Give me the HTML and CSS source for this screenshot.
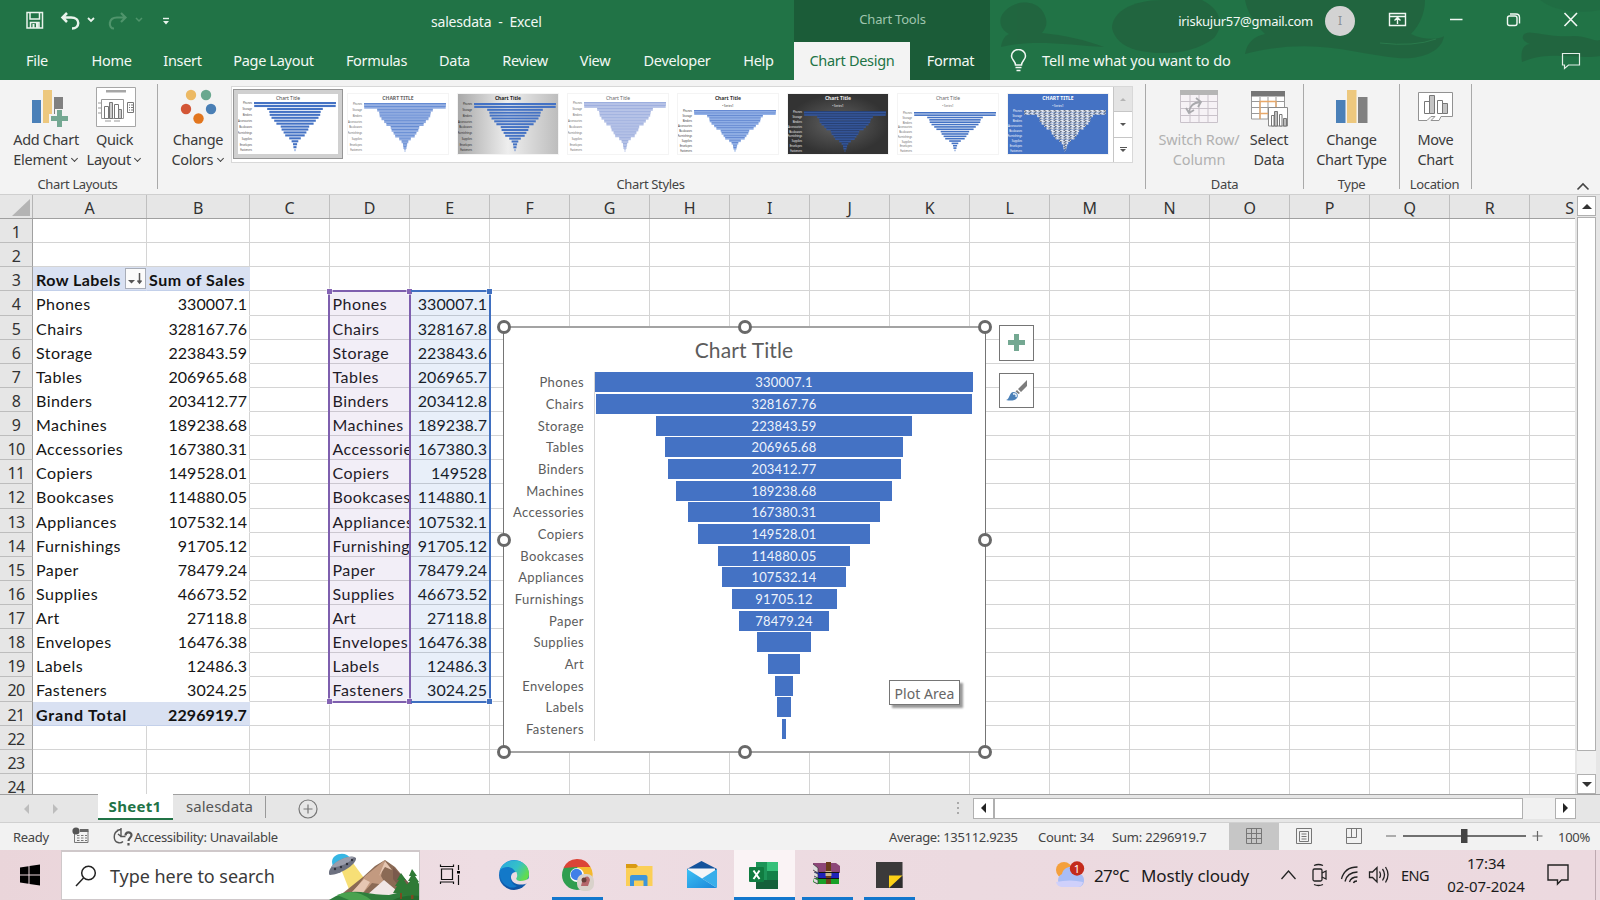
FILE: index.html
```html
<!DOCTYPE html>
<html lang="en">
<head>
<meta charset="utf-8">
<title>salesdata - Excel</title>
<link rel="stylesheet" href="styles.css">
</head>
<body>
<div class="app">
  <header class="top">
    <svg class="art" width="620" height="80" viewBox="980 0 620 80">
      <g fill="#215f3c" opacity=".65">
        <path d="M1001 17c6-14 28-20 40-8 6 8 8 16 1 24 22 2 44 7 62 14-34-2-72-8-103 0 1-6 3-11 8-13-7-4-10-10-8-17z"/>
        <path d="M1112 28c0-16 20-28 50-28h40c20 10 22 26 12 38-20 16-52 18-78 12-14-4-22-12-24-22z"/>
        <path d="M1245 0h180c0 14-6 26-14 34 12 6 28 6 33 2-2 16-24 24-46 22-44-4-84-22-153-4 2-12 10-18 20-20-10-10-18-22-20-34z"/>
        <path d="M1522 62c-2-12 2-18 8-18-12-4-8-14 4-11 16 2 22 4 40 3 14 0 20 6 26 4v16c-22 4-50-6-78 6z"/>
        <path d="M1540 0h60v10c-20 4-44 2-60-10z" opacity=".4"/>
      </g>
      <path d="M1380 43q34 4 56-4" fill="none" stroke="#2a7a4c"/>
    </svg>
    <div class="titlebar">
      <div class="qat">
        <svg width="150" height="24" viewBox="0 0 150 24" fill="none">
          <path d="M2 3.500h15.500v15.500H2z M5 3.500v6.500h9.500v-6.500 M5.500 19v-5.500h8.500v5.500" stroke="#e9f3ec" stroke-width="1.500"/><path d="M7.500 15h2v4h-2z M11 13.500h2.500v5.500H11z" fill="#e9f3ec"/>
          <path d="M42 4l-4.500 4.500L42 13M38 8.500h8c10 0 9 11 1 11" stroke="#e9f3ec" stroke-width="2.500"/>
          <path d="M63 9l3 3 3-3" stroke="#e9f3ec" stroke-width="1.800"/>
          <path d="M96 4l4.500 4.500L96 13M100 8.500h-8c-9 0-9 11-3 11" stroke="#4f946b" stroke-width="2.200"/>
          <path d="M111 9l3 3 3-3" stroke="#4f946b" stroke-width="1.500"/>
          <path d="M138 9.500h6" stroke="#e9f3ec" stroke-width="1.400"/><path d="M138 12h6l-3 3.500z" fill="#e9f3ec"/>
        </svg>
      </div>
      <div class="doc-name">salesdata&nbsp; -&nbsp; Excel</div>
      <div class="tools-title">Chart Tools</div>
      <div class="account">iriskujur57@gmail.com<span class="avatar">I</span></div>
      <svg class="winbtns" width="200" height="24" viewBox="1380 8 200 24" fill="none" stroke="#f2f8f4" stroke-width="1.400">
        <path d="M1389.500 13.500h16v12h-16zM1389.500 16.500h16M1397.500 24v-6M1394.500 20.500l3-3 3 3"/>
        <path d="M1450 19.500h12.500" stroke-width="1.500"/>
        <rect x="1507.500" y="16" width="9.500" height="9.500" rx="2"/><path d="M1510 14h6q3.500 0 3.500 3.500v6"/>
        <path d="M1564.500 13l12.500 13M1577 13l-12.500 13" stroke-width="1.600"/>
      </svg>
    </div>
    <nav class="tabs">
      <span class="t-file">File</span><span class="t-home">Home</span><span class="t-insert">Insert</span><span class="t-page">Page Layout</span><span class="t-form">Formulas</span><span class="t-data">Data</span><span class="t-review">Review</span><span class="t-view">View</span><span class="t-dev">Developer</span><span class="t-help">Help</span><span class="t-design">Chart Design</span><span class="t-format">Format</span>
      <svg class="bulb" width="17" height="24" viewBox="0 0 17 24" fill="none" stroke="#f2f8f4" stroke-width="1.500"><path d="M5.500 16c0-4-4-5-4-9a7 6.500 0 0 1 14 0c0 4-4 5-4 9zM5.500 18.500h6M6.500 21.500h4"/></svg>
      <span class="tell">Tell me what you want to do</span>
      <svg class="comment" width="20" height="18" viewBox="0 0 20 18" fill="none" stroke="#e4efe8" stroke-width="1.200"><path d="M1.500 1.500h17v11.500H7.500l-4 3.500V13h-2z"/></svg>
    </nav>
  </header>

  <section class="ribbon">
    <div class="group g-layouts">
      <div class="btns">
        <div class="btn b-add">
          <svg width="38" height="40" viewBox="0 0 38 40"><path fill="#4a80b8" d="M1 11h9v23H1z"/><path fill="#edc87e" d="M12 1h9v33h-9z"/><path fill="#808080" d="M23 8h9v20h-9z"/><path fill="#f3f3f3" d="M24 20h9v5h5v10h-5v4h-9v-5h-6v-9h6z"/><path fill="#74a892" d="M26 21h5v6h6v5h-6v6h-5v-6h-6v-5h6z"/></svg>
          <span>Add Chart</span><span>Element <i class="dd"></i></span>
        </div>
        <div class="btn b-quick">
          <svg width="40" height="40" viewBox="0 0 40 40"><path fill="#fff" stroke="#a6a6a6" d="M.500.500h39v39H.500z"/><path fill="#a6a6a6" d="M10 3h20v2.500H10z"/><g fill="none" stroke="#777"><path d="M5.500 12.500h22v19h-22zM2 16h3M2 21h3M2 26h3M9 34h6M18 34h6" stroke="#999"/><path fill="#fff" d="M8.500 19.500h4v12h-4zM18.500 17.500h4v14h-4z"/><path fill="#ccc" d="M13.500 15.500h3v16h-3zM22.500 22.500h3v9h-3z"/><path d="M31.500 15.500h6v10h-6zM33 18h1M35 18h2M33 20.500h1M35 20.500h2M33 23h1M35 23h2"/></g></svg>
          <span>Quick</span><span>Layout <i class="dd"></i></span>
        </div>
      </div>
      <div class="glabel">Chart Layouts</div>
    </div>
    <div class="group g-styles">
      <div class="btns">
        <div class="btn b-colors">
          <svg width="38" height="40" viewBox="0 0 38 40"><circle cx="12" cy="6" r="5.200" fill="#ecb964"/><circle cx="27" cy="6" r="5.200" fill="#6aa88f"/><circle cx="7" cy="20" r="5.200" fill="#d35636"/><circle cx="32" cy="20" r="5.200" fill="#4a7fb5"/><circle cx="19.500" cy="29.500" r="5.200" fill="#e2761e"/></svg>
          <span>Change</span><span>Colors <i class="dd"></i></span>
        </div>
        <div class="gallery"><div class="thumbs" id="thumbs"></div>
          <div class="gscroll"><b class="up off"></b><b class="down"></b><b class="more"></b></div>
        </div>
      </div>
      <div class="glabel">Chart Styles</div>
    </div>
    <div class="group g-data">
      <div class="btns">
        <div class="btn b-switch">
          <svg width="38" height="40" viewBox="0 0 38 40" fill="none"><path fill="#f6f2f6" stroke="#c9c2ca" d="M.500 4h37v29.500H.500zM.500 12.500h37M.500 19.500h37M.500 26.500h37M10 6v27M19 6v27M28 6v27"/><path fill="#b5b5b5" d="M0 1h38v5H0z"/><path d="M9 23q1-9 11-10M16 9l5 4-3 5M6 19l3 5 5-3" stroke="#a9a9ad" stroke-width="1.800"/></svg>
          <span>Switch Row/</span><span>Column</span>
        </div>
        <div class="btn b-select">
          <svg width="38" height="40" viewBox="0 0 38 40" fill="none"><path fill="#fff" stroke="#999" d="M.500 3h33v27H.500zM.500 12.500h33M.500 18.500h33M.500 24.500h33M9 8v22M17 8v22M25 8v22"/><path fill="#767676" d="M0 2h34v5.500H0z"/><path stroke="#e8a869" stroke-width="1.300" d="M9 30V12.500h16v6M9 24.500h9"/><path fill="#fff" stroke="#8a8a8a" d="M17.500 18.500h19v18.500h-19z"/><path fill="#fff" stroke="#777" d="M20.500 26.500h2.500v10.500h-2.500zM28.500 25.500h2.500v11.500h-2.500z"/><path fill="#bbb" stroke="#777" d="M23.500 22.500h3v14.500h-3zM32.500 29.500h3v7.500h-3z"/></svg>
          <span>Select</span><span>Data</span>
        </div>
      </div>
      <div class="glabel">Data</div>
    </div>
    <div class="group g-type">
      <div class="btns"><div class="btn">
        <svg width="32" height="40" viewBox="0 0 32 40"><path fill="#4a80b8" d="M0 11h9.500v23H0z"/><path fill="#edc87e" d="M11 1h9.500v33H11z"/><path fill="#808080" d="M22 8h9.500v26H22z"/></svg>
        <span>Change</span><span>Chart Type</span></div></div>
      <div class="glabel">Type</div>
    </div>
    <div class="group g-loc">
      <div class="btns"><div class="btn">
        <svg width="36" height="40" viewBox="0 0 36 40" fill="none"><path fill="#fff" stroke="#929292" d="M.500 3.500h34v24H23l-2 4h-8l4-4h-4l-4 4H.500z"/><path fill="#fff" stroke="#777" d="M6.500 12.500h5v12h-5zM19.500 11.500h5v13h-5z"/><path fill="#c4c4c4" stroke="#777" d="M11.500 6.500h5v18h-5zM24.500 14.500h5v10h-5z"/></svg>
        <span>Move</span><span>Chart</span></div></div>
      <div class="glabel">Location</div>
    </div>
    <svg class="collapse" width="14" height="10" viewBox="0 0 14 10" fill="none" stroke="#444" stroke-width="1.600"><path d="M1.500 8.500L7 3l5.500 5.500"/></svg>
  </section>

  <main class="sheet">
    <div class="grid">
      <div class="cols" id="cols"></div>
      <div class="rows" id="rows"></div>
      <div class="range range-d"><i class="tl"></i><i class="tr"></i><i class="bl"></i><i class="br"></i></div>
      <div class="range range-e"><i class="tr"></i><i class="br"></i></div>
      <div class="chart">
        <div class="chart-title">Chart Title</div>
        <div class="plot" id="plot"></div>
        <i class="h h-nw"></i><i class="h h-n"></i><i class="h h-ne"></i><i class="h h-w"></i><i class="h h-e"></i><i class="h h-sw"></i><i class="h h-s"></i><i class="h h-se"></i>
        <div class="tooltip">Plot Area</div>
        <div class="side">
          <div><svg width="17" height="17" viewBox="0 0 17 17"><path fill="#74a892" d="M6 0h5v6h6v5h-6v6H6v-6H0V6h6z"/></svg></div>
          <div><svg width="22" height="22" viewBox="0 0 22 22"><path fill="#7c7c7c" d="M21 1v6l-6 6-3-3zM11 11l3 3-1.500 1-3-2.500z"/><path fill="#4a80b8" d="M0 21c4-1 3-7 7-8 4 0 6 3 4 6-2 3-7 3-11 2z"/><path d="M7 15q4-1 3 3" stroke="#fff" stroke-width="1.300" fill="none"/></svg></div>
        </div>
      </div>
    </div>
    <div class="vscroll"><b class="vb"><i class="a-up"></i></b><b class="vthumb"></b><b class="vtrack"></b><b class="vb"><i class="a-dn"></i></b></div>
  </main>

  <div class="sheettabs">
    <i class="nav-l"></i><i class="nav-r"></i>
    <span class="tab-on">Sheet1</span><span class="tab-off">salesdata</span>
    <svg class="add" width="20" height="20" viewBox="0 0 20 20" fill="none" stroke="#777" stroke-width="1.200"><circle cx="10" cy="10" r="9"/><path d="M10 5.500v9M5.500 10h9"/></svg>
    <svg class="dots" width="3" height="14" viewBox="0 0 3 14" fill="#aaa"><path d="M0 0h2v2H0zM0 5h2v2H0zM0 10h2v2H0z"/></svg>
    <div class="hscroll"><b class="hb"><i class="a-l"></i></b><b class="hthumb"></b><b class="htrack"></b><b class="hb"><i class="a-r"></i></b></div>
  </div>

  <div class="status">
    <span class="s-ready">Ready</span>
    <svg class="s-rec" width="18" height="17" viewBox="0 0 18 17" fill="none"><path stroke="#777" d="M2.500 6.500v9h13.500V3.500H8"/><path stroke="#777" stroke-dasharray="2.500 1.500" d="M5 8.500h10M5 11h10M5 13.500h10"/><path fill="#666" d="M8 2h8.500v3H8z"/><circle cx="4" cy="4" r="3.600" fill="#555"/></svg>
    <svg class="s-acc" width="20" height="19" viewBox="0 0 20 19" fill="none" stroke="#555" stroke-width="1.400"><path d="M5 3.500C0 6 0 14 5 15.500q3 1 5-1M4 3.500l3.500-1M8 1v8.500h4.500M8 9.500l-3-2.500"/><path d="M12.500 8.500c0-4 6-4 6-.500 0 3-3 2.500-3 6M15.500 16v2.500" stroke-width="2.200"/></svg>
    <span class="s-text">Accessibility: Unavailable</span>
    <span class="s-avg">Average: 135112.9235</span><span class="s-cnt">Count: 34</span><span class="s-sum">Sum: 2296919.7</span>
    <span class="view on"><svg width="17" height="17" viewBox="0 0 17 17" fill="none" stroke="#777"><path d="M.500.500h15v15h-15zM5.500.500v15M10.500.500v15M.500 5.500h15M.500 10.500h15"/></svg></span>
    <span class="view"><svg width="17" height="17" viewBox="0 0 17 17" fill="none" stroke="#777"><path d="M.500.500h15v15h-15zM3.500 3.500h9v10h-9zM5.500 6h5M5.500 8.500h5M5.500 11h5"/></svg></span>
    <span class="view"><svg width="17" height="17" viewBox="0 0 17 17" fill="none" stroke="#777"><path d="M.500.500h15v15h-15zM5.500.500v9M10.500.500v9M.500 9.500h10"/></svg></span>
    <svg class="zoombar" width="160" height="18" viewBox="1384 0 160 18"><path d="M1386 9h10M1532.500 9h10M1537.500 4v10" stroke="#666" stroke-width="1.200"/><path d="M1403 9h123" stroke="#444" stroke-width="1.500"/><path d="M1461 2h6.500v14h-6.500z" fill="#444"/></svg>
    <span class="s-zoom">100%</span>
  </div>

  <footer class="taskbar">
    <svg class="start" width="22" height="22" viewBox="0 0 22 22"><path d="M1 3.500l8.500-1.300v8.300H1zM10.500 2L21 .500v10H10.500zM1 11.500h8.500v8.300L1 18.500zM10.500 11.500H21v10L10.500 20z"/></svg>
    <div class="search">
      <svg class="mag" width="22" height="22" viewBox="0 0 22 22" fill="none" stroke="#222" stroke-width="1.500"><circle cx="13.500" cy="8" r="6.800"/><path d="M8.500 13L1 21"/></svg>
      <span>Type here to search</span>
      <svg class="scene" width="90" height="47" viewBox="0 0 90 47">
        <path fill="#f7df76" d="M12 16l12-6 11 15-12 19z"/><path fill="#8b6a55" d="M14 40l20-16 12-11 10-6 10 7 20 24-20 9H26z"/><path fill="#c39a80" d="M36 23l20-16-4 16 5 9-14-2-8 9-12 2z"/><path fill="#e6c6b2" d="M22 40l13-14 6 3-9 14zM56 8l7 9-7-3-6 9z"/><path fill="#f1e7e6" d="M38 42l17-15 12 10 10 5-12 3z"/><path fill="#7a5a4c" d="M64 14l22 22-12 2-10-12z"/>
        <path fill="#2e7d3c" d="M0 47q14-10 32-8 16 3 28 3l32-8v13z"/><path fill="#49a24f" d="M8 42q18-8 34 5H20z"/><path fill="#246b2e" d="M64 47q12-6 28-4v4z"/>
        <path fill="#7b4b22" d="M71 36h2v10h-2zM82 34h2.500v12H82z"/><path fill="#2f7a36" d="M72 20l5 7h-2l4 6h-2l4 7H64l4-7h-2l4-6h-2zM83 16l5 7h-2l4 6h-1l3 6v7H74l4-8h-2l5-6h-2l3-5h-2z"/>
        <path fill="#36b6e3" d="M3 9C3 2 12-1 18 2l5 4-10 8-9 1z"/><path fill="#6d7180" d="M1 16C6 7 22 1 27 5c1 6-16 17-26 17-2-1-1-4 0-6z"/><path fill="#9a9dab" d="M2 14C8 6 22 2 25 4 20 11 8 15 2 14z"/><g fill="#30323b"><circle cx="6" cy="16" r="1.200"/><circle cx="12" cy="14" r="1.200"/><circle cx="18" cy="11" r="1.200"/><circle cx="23" cy="7" r="1.200"/></g>
      </svg>
    </div>
    <svg class="apps" width="500" height="50" viewBox="420 850 500 50">
      <defs>
        <linearGradient id="e1" x1="0" y1="0" x2="1" y2=".5"><stop offset="0" stop-color="#2aa6e0"/><stop offset=".6" stop-color="#35c1c8"/><stop offset="1" stop-color="#62dc4e"/></linearGradient>
        <linearGradient id="e2" x1="0" y1="0" x2="0" y2="1"><stop offset="0" stop-color="#1f8fdd"/><stop offset="1" stop-color="#0d4fa0"/></linearGradient>
        <linearGradient id="m1" x1="0" y1="0" x2="1" y2="1"><stop offset="0" stop-color="#3cc0f5"/><stop offset="1" stop-color="#1a86d8"/></linearGradient>
      </defs>
      <g fill="none" stroke="#111" stroke-width="1.200"><path d="M441.500 869h11v10.500h-11zM440.500 864.500v2h13v-2M440.500 884v-2h13v2M458.500 865v5M458.500 875v10"/></g><path d="M457 871h3v2.500h-3z"/>
      <circle cx="514" cy="875" r="15" fill="url(#e2)"/><path fill="url(#e1)" d="M499.500 871c4-15 29.500-14 29.500 3 0 8-9 10-13 7-2-2 1-2 0-6-2-7-12-8-16.500-4z"/><path fill="#1379c9" d="M500 870c7-6 15-2 16 4-7-2-8 9 1 12-6 5-19-2-17-16z"/><path fill="#ecdce2" d="M516.500 872c-7 0-7 8-2 11 4 2 9 2 13 0l2-1v-4c-4 3-10 4-12.500 2-2-2 1-2 0-6z"/>
      <circle cx="577" cy="875" r="15" fill="#2f9e4f"/><path fill="#dc4437" d="M563.500 868a15 15 0 0 1 27-1H577z"/><path fill="#f4b92f" d="M577 867h13.500a15 15 0 0 1-10 22.500l3-12z"/><circle cx="577" cy="875" r="7" fill="#fff"/><circle cx="576.500" cy="874.500" r="5.700" fill="#3f7fe8"/><rect x="577" y="874" width="17" height="17" rx="7" fill="#d9d2cb"/><path fill="#b5676a" d="M585 877q4-2 5 3l-2 6h-7l1-4q3 0 3-5z"/><circle cx="584" cy="880" r="2.500" fill="#674039"/>
      <path fill="#d99a13" d="M626 864h10l2 2v3h-12z"/><path fill="#fbcf57" d="M626 868h10l2-2h14.500v20H626z"/><path fill="#3d95da" d="M630 877q0-2 2-2h13.500q2 0 2 2v9h-4v-5.500H634v5.500h-4z"/>
      <path fill="#14539c" d="M687 869l14.500-8 15.500 8v4h-30z"/><path fill="#f4f6f8" d="M688 868.500h27v6l-13.500 6-13.500-6z"/><path fill="url(#m1)" d="M687 869l30 19h-30z"/><path fill="#38aeea" d="M717 869v19l-15-9.500z"/>
      <path fill="#faf3f5" d="M734 850h61v50h-61z"/><path fill="#1d9458" d="M756 862h22v27h-22z"/><path fill="#36c07a" d="M767 862h11v9h-11z"/><path fill="#15603a" d="M756 880h22v9h-22z"/><path fill="#148049" d="M767 871h11v9h-11z"/><rect x="749" y="867" width="15" height="15" rx="1" fill="#107c41"/><path d="M753.500 870.500l6 8.500M759.500 870.500l-6 8.500" stroke="#fff" stroke-width="2"/>
      <path fill="#8d4778" d="M813 863h23l4 3v7h-23l-4-3z"/><path fill="#1e23b8" d="M814 872h25v6h-22l-3-2z"/><path fill="#17a027" d="M814 878h25v6h-22l-4-2z"/><path d="M813 864l5 4v5l-5-3M814 872l4 2v4l-4-2M814 878l4 2v4l-4-2" fill="#ddd" stroke="#333" stroke-width=".7"/><path fill="#6b3d1c" d="M826 862h5v22h-5z"/><path fill="#c9b489" d="M825.500 871h6v5h-6z"/><path d="M819 872.500h20M818 878.500h21" stroke="#141414"/>
      <path fill="#3b3a3a" d="M876 862h26.500v26H876z"/><path fill="#fcd116" d="M889 875.500h13.500L889 888z"/><path fill="#2a2a2a" d="M902.500 876v12h-13z" opacity=".8"/>
      <path fill="#1277cd" d="M552 897h51v3h-51zM734 897h61v3h-61zM802 897h51v3h-51zM864 897h51v3h-51z"/>
    </svg>
    <svg class="weather" width="32" height="30" viewBox="0 0 32 30"><circle cx="9" cy="10" r="8" fill="#f4a03c"/><path fill="#a9bdf5" d="M8 27a7 7 0 0 1-1-13c2-9 14-9 16-1 8 1 8 14 0 14z"/><path fill="#cfd0fb" d="M1 22q14-3 27 0-1 5-5 5H8q-6 0-7-5z"/><circle cx="22" cy="8.500" r="7.200" fill="#c42b1c"/><text x="22" y="12.800" text-anchor="middle" class="badge">1</text></svg>
    <span class="w-temp">27°C</span><span class="w-text">Mostly cloudy</span>
    <svg class="tray" width="110" height="26" viewBox="1280 862 110 26" fill="none" stroke="#222" stroke-width="1.300"><path d="M1281.500 879l7-8 7 8"/><rect x="1313" y="869" width="9" height="12" rx="1.500"/><path d="M1322 873l4-2v8l-4-2M1314 865.500q4.500-2 9 0M1314 884.500q4.500 2 9 0"/><path d="M1341.500 879q3-12 16-12M1345 881.500q2-9 12.500-9.500M1349.500 882q1.500-5 8-5M1353.500 883q.500-2 3.500-2"/><path d="M1369.500 872h3l4.500-4.500v14.500l-4.500-4.500h-3zM1379.500 871.500q2 3.500 0 6.500M1382.500 869q4 5.500 0 11.500M1385.500 867q5 7.500 0 15.500"/></svg>
    <span class="lang">ENG</span>
    <span class="clock"><span>17:34</span><span>02-07-2024</span></span>
    <svg class="notif" width="22" height="24" viewBox="0 0 22 24" fill="none" stroke="#222" stroke-width="1.400"><path d="M1 2h20v15h-6.500v0l-4 4v-4H1z"/></svg>
    <i class="peek"></i>
  </footer>
</div>
<script src="script.js"></script>
</body>
</html>
```
FILE: styles.css
```css
* { box-sizing: border-box; }
body { margin: 0; width: 1600px; height: 900px; overflow: hidden; font-family: "Noto Sans", "Open Sans", sans-serif; color: #333; }
i, b { font-style: normal; display: block; }
svg { display: block; flex: none; }
.app { display: flex; flex-direction: column; width: 1600px; height: 900px; white-space: nowrap; }

/* Title bar and ribbon tabs */
.top { position: relative; height: 80px; background: linear-gradient(90deg, transparent 794px, #1b5c38 794px, #1b5c38 990px, transparent 990px), #217346; color: #f2f8f4; }
.art { position: absolute; right: 0; top: 0; clip-path: inset(0 0 0 10px); }
.titlebar { position: relative; display: flex; align-items: center; height: 42px; }
.qat { width: 431px; padding-left: 25px; }
.doc-name { width: 363px; font-size: 14px; letter-spacing: -.2px; }
.tools-title { width: 197px; text-align: center; font-size: 13px; letter-spacing: -.2px; color: #9fc5ae; padding-bottom: 4px; }
.account { display: flex; align-items: center; justify-content: flex-end; width: 364px; font-size: 13px; letter-spacing: -.27px; gap: 12px; }
.avatar { width: 30px; height: 30px; border-radius: 50%; background: #d3d3d3; color: #8a8f96; text-align: center; line-height: 30px; font-size: 12px; }
.winbtns { margin-left: 25px; margin-top: -2px; }
.tabs { position: relative; display: flex; align-items: center; height: 38px; padding-bottom: 2px; font-size: 14.5px; letter-spacing: -.3px; text-align: center; }
.t-file { width: 74px; } .t-home { width: 75px; } .t-insert { width: 67px; } .t-page { width: 115px; } .t-form { width: 91px; } .t-data { width: 65px; }
.t-review { width: 76px; } .t-view { width: 64px; } .t-dev { width: 100px; } .t-help { width: 63px; margin-right: 4px; }
.t-design { width: 116px; height: 38px; line-height: 37px; background: #f3f3f3; color: #217346; margin-bottom: -2px; }
.t-format { width: 81px; }
.bulb { margin-left: 19px; margin-top: 2px; }
.tell { margin-left: 15px; width: 519px; text-align: left; letter-spacing: -.1px; }
.comment { margin-top: 2px; }

/* Ribbon */
.ribbon { position: relative; display: flex; height: 115px; background: #f3f3f3; border-bottom: 1px solid #cfcfcf; padding-top: 4px; }
.group { height: 105px; border-right: 1px solid #a9a9a9; display: flex; flex-direction: column; }
.btns { display: flex; height: 88px; }
.btn { display: flex; flex-direction: column; align-items: center; font-size: 14.5px; letter-spacing: -.3px; line-height: 20px; color: #3b3b3b; }
.btn svg { margin: 5px 0 0; height: 40px; }
.btn .dd { display: inline-block; width: 5px; height: 5px; border: solid #444; border-width: 0 1.5px 1.5px 0; transform: rotate(45deg); margin: 0 2px 4px 1px; }
.glabel { text-align: center; font-size: 13px; letter-spacing: -.35px; line-height: 18px; margin-top: 3px; margin-bottom: -8px; color: #444; }
.g-layouts { width: 158px; }
.g-layouts .glabel { padding-right: 2px; }
.b-add { width: 80px; margin-left: 6px; } .b-add svg { margin-left: 8px; }
.b-quick { width: 57px; } .b-quick svg { margin: 3px 0 2px 2px; }
.g-styles { width: 988px; }
.g-styles .glabel { padding-right: 2px; }
.b-colors { width: 73px; padding-left: 7px; }
.gallery { display: flex; width: 902px; height: 77px; margin-top: 2px; border: 1px solid #d8d8d8; background: #fff; }
.thumbs { display: flex; width: 881px; padding: 7px 0 0 6px; gap: 10px; }
.thumb { width: 100px; height: 60px; flex: none; box-shadow: 0 0 0 1px #f4f4f4; }
.thumb.sel { box-shadow: 0 0 0 4px #d0d0d0, 0 0 0 5px #969696; }
.gscroll { flex: 1; display: flex; flex-direction: column; border-left: 1px solid #c6c6c6; }
.gscroll b { flex: 1; display: flex; align-items: center; justify-content: center; border-bottom: 1px solid #c6c6c6; }
.gscroll b:last-child { border: 0; flex-direction: column; gap: 1px; }
.gscroll b::after { content: ""; border: 3.5px solid transparent; border-top-color: #555; border-bottom: 0; }
.gscroll .off { background: #e4e4e4; }
.gscroll .off::after { border-bottom: 3.5px solid #b5b5b5; border-top: 0; }
.gscroll .more::before { content: ""; width: 7px; height: 1px; background: #555; }
.g-data { width: 158px; }
.b-switch { width: 100px; color: #b1b1b1; margin-left: 3px; } .b-select { width: 40px; } .b-select svg { margin-left: 1px; }
.b-switch span { letter-spacing: -.1px; }
.g-type { width: 96px; } .g-loc { width: 72px; }
.g-type .btn, .g-loc .btn { width: 100%; }
.g-loc .glabel { padding-right: 2px; }
.collapse { position: absolute; right: 10px; bottom: 3px; }

/* Worksheet */
.sheet { display: flex; height: 599px; background: #e6e6e6; overflow: hidden; }
.grid { position: relative; width: 1575px; height: 599px; overflow: hidden; background: #fff; }
.cols { display: flex; height: 24px; background: #e6e6e6; border-bottom: 1px solid #a0a0a0; }
.cols span { flex: none; border-right: 1px solid #bfbfbf; text-align: center; font-size: 16px; letter-spacing: -.3px; line-height: 26px; height: 23px; }
.cols .corner { border-color: #b5b5b5; }
.corner::after { content: ""; display: block; margin: 4px 0 0 12px; border: solid transparent; border-width: 0 0 17px 18px; border-bottom-color: #b4b4b4; width: 0; }
.row { display: flex; height: 24.14px; }
.row > * { flex: none; border-right: 1px solid #d4d4d4; border-bottom: 1px solid #d4d4d4; overflow: hidden; line-height: 25px; font-family: Lato, "Liberation Sans", sans-serif; font-size: 16px; letter-spacing: .47px; color: #151515; padding: 0 2px 0 3px; }
.row .num { background: #e6e6e6; border-color: #ababab #a0a0a0 #bdbdbd; text-align: center; font-family: "Noto Sans", sans-serif; letter-spacing: -.6px; color: #333; padding: 0; line-height: 26px; }
.w-num { width: 33px; } .w-a { width: 114px; } .w-b { width: 103px; } .w-c { width: 80px; }
.row .r { text-align: right; letter-spacing: .06px; }
.row .d { padding-left: 2.5px; }
.pivot .pa { border-color: transparent; }
.pivot .pb { border-bottom-color: transparent; }
.band .pa, .band .pb { background: #d9e1f2; font-weight: 700; border-color: #d9e1f2 #d9e1f2 #c3d0ea; letter-spacing: .45px; color: #111; }
.band .pa { display: flex; justify-content: space-between; padding-right: 0; }
.head .pb { text-align: left; padding-left: 2px; letter-spacing: .55px; }
.total .pa { letter-spacing: .85px; } .total .pb { letter-spacing: .1px; }
.filter { width: 21px; height: 21px; margin-top: 1px; background: #fbfbfb; border: 1px solid #a8adb8; flex: none; }

/* Ranges linked to the chart */
.range { position: absolute; top: 95px; height: 413px; }
.range-d { left: 328px; width: 83px; border: 2px solid #7e5fae; background: rgba(126, 84, 176, .1); }
.range-e { left: 411px; width: 80px; border: 2px solid #3f6fc0; border-left: 0; background: rgba(48, 112, 200, .11); }
.range i { position: absolute; width: 5px; height: 5px; background: #8463b4; box-shadow: 0 0 0 .5px #fff; }
.range-e i { background: #3f6fc0; }
.tl { top: -3px; left: -3px; } .tr { top: -3px; right: -3px; } .bl { bottom: -3px; left: -3px; } .br { bottom: -3px; right: -3px; }

/* Floating chart object */
.chart { position: absolute; left: 503px; top: 131px; width: 483px; height: 427px; background: #fff; border: 1px solid #757575; border-top: 2px solid #a3a3a3; border-bottom: 2px solid #a3a3a3; font-family: Lato, "Liberation Sans", sans-serif; }
.chart-title { height: 44.4px; line-height: 43px; text-align: center; font-size: 21px; color: #5c5c5c; letter-spacing: .15px; padding-right: 1px; }
.plot { display: flex; flex-direction: column; }
.prow { display: flex; height: 21.67px; }
.plab { width: 91px; padding-right: 10px; text-align: right; font-size: 13px; letter-spacing: .4px; line-height: 21px; color: #5c5c5c; border-right: 1px solid #d5d5d5; }
.ptrack { width: 378px; display: flex; justify-content: center; }
.bar { height: 20px; line-height: 21px; background: #4472c4; color: #eef3fb; text-align: center; font-size: 13px; letter-spacing: .2px; }
.h { position: absolute; width: 14px; height: 14px; border-radius: 50%; border: 3px solid #696969; background: #fff; }
.h-nw, .h-w, .h-sw { left: -7px; } .h-ne, .h-e, .h-se { right: -7px; } .h-n, .h-s { left: 234px; }
.h-nw, .h-n, .h-ne { top: -8px; } .h-w, .h-e { top: 205px; } .h-sw, .h-s, .h-se { bottom: -8px; }
.tooltip { position: absolute; left: 385px; top: 352px; width: 71px; height: 25px; line-height: 25px; text-align: center; background: #fff; border: 1px solid #767676; box-shadow: 3px 3px 2px rgba(0, 0, 0, .4); font-family: "Noto Sans", sans-serif; font-size: 14px; letter-spacing: .05px; color: #666; }
.side { position: absolute; left: 495px; top: -3px; display: flex; flex-direction: column; gap: 12px; }
.side div { width: 35px; height: 35.500px; background: #fff; border: 1px solid #757575; display: flex; align-items: center; justify-content: center; }

/* Scroll bars */
.vscroll { margin-left: 2px; width: 19px; display: flex; flex-direction: column; padding-top: 1px; }
.vb, .vthumb { background: #fff; border: 1px solid #b0b0b0; }
.vb { height: 20px; display: flex; align-items: center; justify-content: center; }
.vthumb { height: 534px; margin-top: 1px; }
.vtrack { flex: 1; background: #f1f1f1; }
.a-up { border: 5px solid transparent; border-bottom-color: #333; border-top: 0; }
.a-dn { border: 5px solid transparent; border-top-color: #333; border-bottom: 0; }
.a-l { border: 5px solid transparent; border-right-color: #222; border-left: 0; }
.a-r { border: 5px solid transparent; border-left-color: #222; border-right: 0; }

/* Sheet tabs */
.sheettabs { display: flex; align-items: center; height: 29px; background: #e6e6e6; border-top: 1px solid #a0a0a0; border-bottom: 1px solid #d0d0d0; }
.nav-l { margin-left: 24px; border: 5px solid transparent; border-right-color: #bdbdbd; border-left: 0; }
.nav-r { margin: 0 40px 0 24px; border: 5px solid transparent; border-left-color: #bdbdbd; border-right: 0; }
.tab-on { width: 75px; height: 26px; margin-top: -3px; line-height: 24px; background: #fff; border-bottom: 2px solid #217346; text-align: center; font-weight: 700; font-size: 15px; color: #217346; letter-spacing: .3px; padding-right: 1px; }
.tab-off { width: 93px; height: 22px; line-height: 20px; border-right: 1px solid #999; padding-left: 13px; font-size: 15px; letter-spacing: .05px; color: #555; margin-top: -3px; }
.add { margin-left: 32px; }
.dots { margin-left: 639px; }
.hscroll { display: flex; height: 21px; margin-left: 13px; margin-top: -1px; }
.hscroll b { border: 1px solid #b0b0b0; background: #fff; height: 21px; }
.hb { width: 21px; display: flex; align-items: center; justify-content: center; }
.hthumb { width: 529px; }
.hscroll .htrack { width: 32px; background: #f1f1f1; border: 0; }

/* Status bar */
.status { display: flex; align-items: center; height: 27px; background: #f2f2f2; font-size: 13px; letter-spacing: -.3px; color: #444; padding-left: 13px; }
.s-ready { width: 59px; } .s-rec { margin-right: 23px; margin-top: -3px; } .s-text { margin-left: 1px; width: 755px; }
.s-avg { width: 149px; } .s-cnt { width: 74px; } .s-sum { width: 117px; letter-spacing: -.2px; }
.view { width: 50px; height: 27px; display: flex; align-items: center; justify-content: center; }
.view.on { background: #c6c6c6; }
.zoombar { margin-left: 5px; margin-top: -1px; }
.s-zoom { margin-left: 14px; }

/* Windows taskbar */
.taskbar { display: flex; align-items: center; height: 50px; background: linear-gradient(90deg, #ead5da, #eedde3 30%, #ecdae0 60%, #ecd9df); color: #1b1b1b; }
.start { margin-left: 19px; }
.search { margin-left: 20px; width: 359px; height: 50px; background: #fff; border: 1px solid #cfc8ca; border-top-width: 2px; display: flex; align-items: center; font-size: 18px; letter-spacing: -.05px; color: #3a3a3a; }
.mag { margin-left: 13px; } .search span { margin-left: 13px; width: 220px; }
.scene { margin-top: 1px; }
.weather { margin-left: 135px; }
.badge { fill: #fff; font-size: 11px; }
.w-temp { margin-left: 7px; width: 47px; font-size: 17px; letter-spacing: -.6px; }
.w-text { width: 139px; font-size: 17px; letter-spacing: -.15px; }
.lang { margin-left: 11px; width: 45px; font-size: 14.5px; letter-spacing: -.5px; }
.clock { width: 80px; display: flex; flex-direction: column; align-items: center; font-size: 15px; line-height: 23px; letter-spacing: -.1px; }
.notif { margin-left: 21px; }
.peek { margin-left: auto; margin-right: 4px; width: 1px; height: 50px; background: #bda9b0; }
```
FILE: script.js
```js
const items = [
  ["Phones", "330007.1", "330007.1"], ["Chairs", "328167.76", "328167.8"], ["Storage", "223843.59", "223843.6"],
  ["Tables", "206965.68", "206965.7"], ["Binders", "203412.77", "203412.8"], ["Machines", "189238.68", "189238.7"],
  ["Accessories", "167380.31", "167380.3"], ["Copiers", "149528.01", "149528"], ["Bookcases", "114880.05", "114880.1"],
  ["Appliances", "107532.14", "107532.1"], ["Furnishings", "91705.12", "91705.12"], ["Paper", "78479.24", "78479.24"],
  ["Supplies", "46673.52", "46673.52"], ["Art", "27118.8", "27118.8"], ["Envelopes", "16476.38", "16476.38"],
  ["Labels", "12486.3", "12486.3"], ["Fasteners", "3024.25", "3024.25"]
];
const max = 330007.1;

document.getElementById("cols").innerHTML = '<span class="corner w-num"></span>' +
  [..."ABCDEFGHIJKLMNOPQRS"].map((c, i) => `<span class="${i === 0 ? "w-a" : i === 1 ? "w-b" : "w-c"}">${c}</span>`).join("");

const filter = '<span class="filter"><svg width="19" height="19" viewBox="0 0 19 19"><path d="M2 11h7l-3.500 3.500z" fill="#555"/><path d="M13.500 4v10M11.500 11.500l2 2.500 2-2.500" stroke="#555" stroke-width="1.500" fill="none"/></svg></span>';
let rows = "";
for (let r = 1; r <= 24; r++) {
  const it = items[r - 4];
  let a = "", b = "", d = "", e = "", cls = "row";
  if (r === 3) { a = "Row Labels" + filter; b = "Sum of Sales"; cls += " band head"; }
  if (r === 21) { a = "Grand Total"; b = "2296919.7"; cls += " band total"; }
  if (it) { a = it[0]; b = it[1]; d = it[0]; e = it[2]; cls += " pivot"; }
  rows += `<div class="${cls}"><span class="num w-num">${r}</span><span class="w-a pa">${a}</span><span class="w-b pb${r === 3 ? "" : " r"}">${b}</span><span class="w-c"></span><span class="w-c d">${d}</span><span class="w-c r">${e}</span>` +
    '<span class="w-c"></span>'.repeat(14) + "</div>";
}
document.getElementById("rows").innerHTML = rows;

document.getElementById("plot").innerHTML = items.map((it, i) =>
  `<div class="prow"><span class="plab">${it[0]}</span><span class="ptrack"><span class="bar" style="width:${(it[1] / max * 378).toFixed(1)}px">${i < 12 ? it[1] : ""}</span></span></div>`).join("");

// Chart style gallery previews
const styles = [
  { bg: "#fff", fg: "#444", title: "Chart Title", bar: "#4472c4", top: 8, h: .72 },
  { bg: "#fff", fg: "#666", title: "CHART TITLE", bar: "#8eaae0", edge: "#5b84d0", top: 9, h: .98, bold: true },
  { bg: "url(#silver)", fg: "#222", title: "Chart Title", bar: "#4472c4", top: 9, h: .72, bold: true },
  { bg: "#fff", fg: "#666", title: "Chart Title", bar: "#b4c1e6", edge: "#97a9dc", top: 8, h: 1 },
  { bg: "#fff", fg: "#333", title: "Chart Title", bar: "#8faee5", edge: "#5a80cd", top: 16, h: 1, legend: true, bold: true },
  { bg: "url(#coal)", fg: "#eee", title: "Chart Title", bar: "#34569b", edge: "#253c6d", top: 17, h: 1, legend: true, bold: true },
  { bg: "#fff", fg: "#666", title: "Chart Title", bar: "#4472c4", top: 18, h: .68, legend: true },
  { bg: "#4472c4", fg: "#fff", title: "CHART TITLE", bar: "url(#hatch)", top: 16, h: .9, legend: true, bold: true }
];
document.getElementById("thumbs").innerHTML = styles.map((s, n) => {
  const pitch = (58 - s.top) / 17;
  let g = "";
  items.forEach((it, i) => {
    const w = it[1] / max * 82, y = s.top + i * pitch;
    g += `<rect x="${(57 - w / 2).toFixed(1)}" y="${y.toFixed(2)}" width="${w.toFixed(1)}" height="${(pitch * s.h).toFixed(2)}" fill="${s.bar}"/>`;
    if (s.edge) g += `<rect x="${(57 - w / 2).toFixed(1)}" y="${y.toFixed(2)}" width="${w.toFixed(1)}" height=".8" fill="${s.edge}"/>`;
    if (i % 2 === 0) g += `<text x="14" y="${(y + 2.300).toFixed(1)}" font-size="2.600" text-anchor="end">${it[0]}</text>`;
  });
  return `<svg class="thumb${n ? "" : " sel"}" viewBox="0 0 100 60"><defs>
    <linearGradient id="silver" x1="0" y1="0" x2="1" y2="0"><stop offset="0" stop-color="#a9a9a9"/><stop offset=".5" stop-color="#eee"/><stop offset="1" stop-color="#bdbdbd"/></linearGradient>
    <radialGradient id="coal"><stop offset="0" stop-color="#626262"/><stop offset="1" stop-color="#333"/></radialGradient>
    <pattern id="hatch" width="5" height="2.470" patternUnits="userSpaceOnUse"><path d="M0 0h5v2.470H0z" fill="#e4e8f0"/><path d="M0 2.470L2.500 0H4L1.500 2.470z" fill="#505a6e"/></pattern></defs>
    <rect width="100" height="60" fill="${s.bg}"/><g fill="${s.fg}"><text x="50" y="5.500" font-size="5" text-anchor="middle" font-weight="${s.bold ? 700 : 400}">${s.title}</text>
    ${s.legend ? '<text x="50" y="12.800" font-size="2.800" text-anchor="middle">• Series1</text>' : ""}${g}</g></svg>`;
}).join("");
```
